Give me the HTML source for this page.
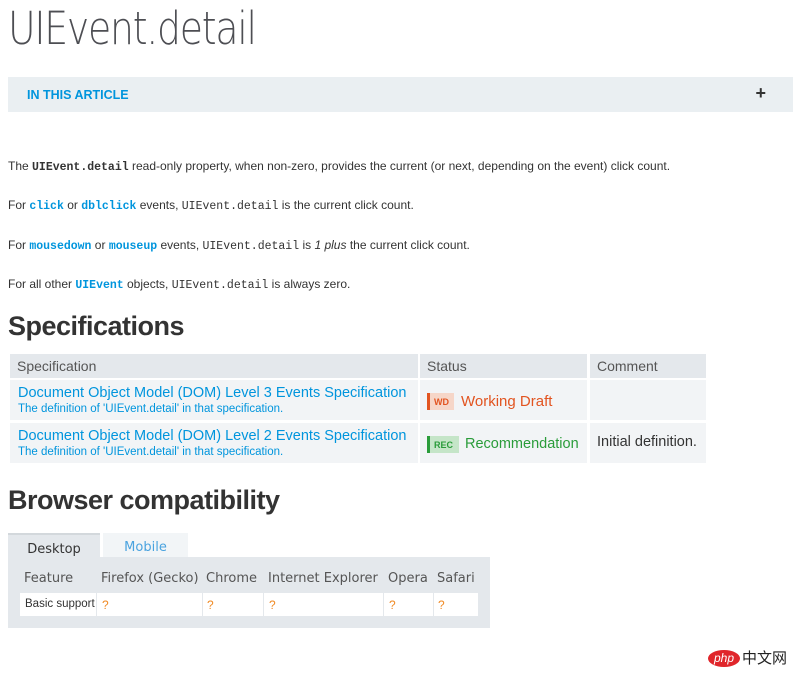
<!DOCTYPE html>
<html><head><meta charset="utf-8"><style>
*{margin:0;padding:0;box-sizing:border-box}
body{width:800px;height:679px;background:#fff;font-family:"Liberation Sans",sans-serif;color:#333;position:relative;overflow:hidden}
.abs{position:absolute;white-space:nowrap}
h1{position:absolute;left:8px;top:2px;font-size:45px;color:#4d4e53;letter-spacing:-1.5px;font-family:"DejaVu Sans",sans-serif;font-weight:200;transform:scaleX(0.84);transform-origin:0 0;white-space:nowrap}
.art{position:absolute;left:8px;top:77px;width:785px;height:35px;background:#eaeff2}
.art span{position:absolute;left:19px;top:11px;font-size:12.5px;font-weight:bold;color:#0095dd}
.art b{position:absolute;right:27px;top:6px;font-size:18px;color:#333}
p{position:absolute;left:8px;font-size:12px;color:#333;white-space:nowrap}
code{font-family:"Liberation Mono",monospace;font-size:11.5px}
code.b{font-weight:bold}
a{color:#0095dd;text-decoration:none}
a code{font-weight:bold}
h2{position:absolute;left:8px;font-size:27px;font-weight:bold;color:#333;letter-spacing:-0.5px}
.c{position:absolute;}
.hd{background:#e4e8ec;color:#555;font-size:14px;padding:4px 7px}
.cell{background:#f2f4f6}
.tab{position:absolute;text-align:center;padding-top:7px;font-family:"DejaVu Sans",sans-serif;font-size:13px}
.bh{position:absolute;top:571px;font-size:13px;color:#555;font-family:"DejaVu Sans",sans-serif;white-space:nowrap}
</style></head><body>
<h1>UIEvent.detail</h1>
<div class="art"><span>IN THIS ARTICLE</span><b>+</b></div>
<p style="top:159px">The <code class="b">UIEvent.detail</code> read-only property, when non-zero, provides the current (or next, depending on the event) click count.</p>
<p style="top:198px">For <a><code>click</code></a> or <a><code>dblclick</code></a> events, <code>UIEvent.detail</code> is the current click count.</p>
<p style="top:238px">For <a><code>mousedown</code></a> or <a><code>mouseup</code></a> events, <code>UIEvent.detail</code> is <i>1 plus</i> the current click count.</p>
<p style="top:277px">For all other <a><code>UIEvent</code></a> objects, <code>UIEvent.detail</code> is always zero.</p>
<h2 style="top:311px">Specifications</h2>
<div class="c hd" style="left:10px;top:354px;width:408px;height:24px">Specification</div>
<div class="c hd" style="left:420px;top:354px;width:167px;height:24px">Status</div>
<div class="c hd" style="left:590px;top:354px;width:116px;height:24px">Comment</div>
<div class="c cell" style="left:10px;top:380px;width:408px;height:40px"><div class="abs" style="left:8px;top:5px;font-size:14.5px;color:#0095dd">Document Object Model (DOM) Level 3 Events Specification</div><div class="abs" style="left:8px;top:23px;font-size:11.5px;color:#0095dd">The definition of 'UIEvent.detail' in that specification.</div></div>
<div class="c cell" style="left:420px;top:380px;width:167px;height:40px"><div class="abs" style="left:7px;top:13px;width:27px;height:17px;background:#f6d6c8;border-left:3px solid #e25420;font-size:9px;font-weight:bold;color:#e25420;padding:4px 0 0 4px">WD</div><div class="abs" style="left:41px;top:13px;font-size:15px;color:#e25420">Working Draft</div></div>
<div class="c cell" style="left:590px;top:380px;width:116px;height:40px"></div>
<div class="c cell" style="left:10px;top:423px;width:408px;height:40px"><div class="abs" style="left:8px;top:5px;font-size:14.5px;color:#0095dd">Document Object Model (DOM) Level 2 Events Specification</div><div class="abs" style="left:8px;top:23px;font-size:11.5px;color:#0095dd">The definition of 'UIEvent.detail' in that specification.</div></div>
<div class="c cell" style="left:420px;top:423px;width:167px;height:40px"><div class="abs" style="left:7px;top:13px;width:32px;height:17px;background:#c5e5c8;border-left:3px solid #2a9c3a;font-size:9px;font-weight:bold;color:#2a9c3a;padding:4px 0 0 4px">REC</div><div class="abs" style="left:45px;top:13px;font-size:14.5px;color:#2a9c3a">Recommendation</div></div>
<div class="c cell" style="left:590px;top:423px;width:116px;height:40px"><div class="abs" style="left:7px;top:11px;font-size:14.5px;color:#333">Initial definition.</div></div>
<h2 style="top:485px">Browser compatibility</h2>
<div class="tab" style="left:8px;top:533px;width:92px;height:25px;background:#e4e8ec;border-top:2px solid #d3d8dc;color:#333">Desktop</div>
<div class="tab" style="left:103px;top:533px;width:85px;height:24px;background:#f2f5f7;color:#4aa3df">Mobile</div>
<div class="c" style="left:8px;top:557px;width:482px;height:71px;background:#e4e8ec"></div>
<div class="bh" style="left:24px">Feature</div>
<div class="bh" style="left:101px">Firefox (Gecko)</div>
<div class="bh" style="left:206px">Chrome</div>
<div class="bh" style="left:268px">Internet Explorer</div>
<div class="bh" style="left:388px">Opera</div>
<div class="bh" style="left:437px">Safari</div>
<div class="c" style="left:20px;top:593px;width:458px;height:23px;background:#fff"></div>
<div class="c" style="left:96px;top:593px;width:1px;height:23px;background:#e4e8ec"></div>
<div class="c" style="left:202px;top:593px;width:1px;height:23px;background:#e4e8ec"></div>
<div class="c" style="left:263px;top:593px;width:1px;height:23px;background:#e4e8ec"></div>
<div class="c" style="left:383px;top:593px;width:1px;height:23px;background:#e4e8ec"></div>
<div class="c" style="left:433px;top:593px;width:1px;height:23px;background:#e4e8ec"></div>
<div class="abs" style="left:25px;top:598px;font-size:11.5px;color:#333">Basic support</div>
<div class="abs" style="left:102px;top:598px;font-size:12px;color:#f08a24">?</div>
<div class="abs" style="left:207px;top:598px;font-size:12px;color:#f08a24">?</div>
<div class="abs" style="left:269px;top:598px;font-size:12px;color:#f08a24">?</div>
<div class="abs" style="left:389px;top:598px;font-size:12px;color:#f08a24">?</div>
<div class="abs" style="left:438px;top:598px;font-size:12px;color:#f08a24">?</div>
<div class="abs" style="left:708px;top:650px;width:32px;height:17px;border-radius:50%;background:#e0262b;color:#fff;font-size:12px;font-style:italic;text-align:center;line-height:16px">php</div>
<div class="abs" style="left:742px;top:649px;font-size:15px;color:#222;font-family:'Noto Sans CJK SC',sans-serif;line-height:18px">中文网</div>
</body></html>
